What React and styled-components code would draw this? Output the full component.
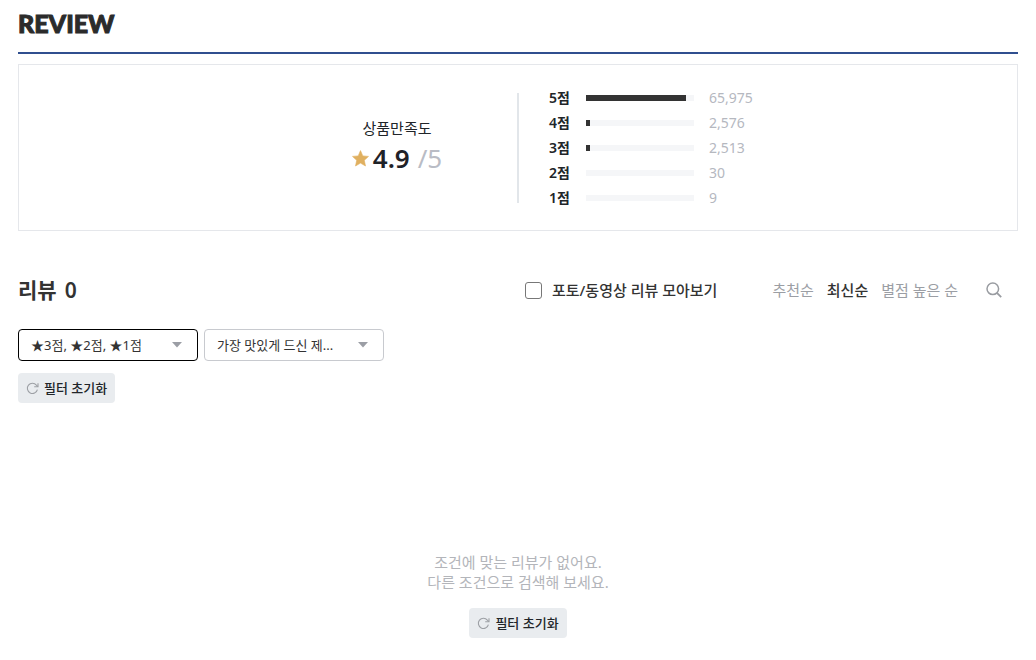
import React, { useState } from "react";
import styled, { createGlobalStyle } from "styled-components";

const GlobalStyle = createGlobalStyle`
  * { box-sizing: border-box; }
  body {
    margin: 0;
    background: #fff;
    color: #333;
    font-family: "Noto Sans", "Noto Sans CJK KR", sans-serif;
    font-size: 14px;
    line-height: 20px;
  }
  button, select, input { font: inherit; color: inherit; margin: 0; }
`;

const Page = styled.main`
  padding: 8px 18px 22px;
`;

const Title = styled.h1`
  margin: 0;
  padding-bottom: 14px;
  border-bottom: 2px solid #304f8f;
  color: #2b2b2b;
  font-family: Lato, sans-serif;
  font-size: 25px;
  font-weight: 900;
  line-height: 30px;
  -webkit-text-stroke: 1px #2b2b2b;
`;

const Summary = styled.section`
  display: grid;
  grid-template-columns: 1fr 2px 1fr;
  align-items: center;
  margin-top: 10px;
  padding: 23px 0 22px;
  border: 1px solid #e5e7eb;
`;

const Score = styled.div`
  justify-self: end;
  width: 90px;
  margin-right: 75px;
  text-align: center;
  white-space: nowrap;
`;

const ScoreLabel = styled.div`
  color: #212529;
  font-size: 15px;
`;

const ScoreValue = styled.div`
  display: flex;
  align-items: center;
  justify-content: center;
  height: 40px;
  color: #1f2228;
  font-size: 26px;
  line-height: 40px;

  svg { flex: none; margin-right: 4px; }
  b { font-weight: 600; }
  span { margin-left: 8px; color: #b9bcc5; }
`;

const Divider = styled.div`
  height: 110px;
  background: #e2e6ea;
`;

const Distribution = styled.ul`
  display: grid;
  gap: 5px;
  margin: 0;
  padding: 0 0 0 30px;
  list-style: none;
`;

const DistributionRow = styled.li`
  display: grid;
  grid-template-columns: 22px 108px auto;
  column-gap: 15px;
  align-items: center;
  color: #b5b8bf;
  white-space: nowrap;

  strong { color: #212529; font-weight: 600; }
`;

const Track = styled.div`
  height: 6px;
  background: #f5f6f8;
`;

const Fill = styled.div`
  height: 6px;
  background: #333;
`;

const ListHeader = styled.header`
  display: flex;
  align-items: center;
  margin-top: 44px;
  padding-right: 16px;
  height: 30px;
  white-space: nowrap;
`;

const ListTitle = styled.h2`
  display: flex;
  gap: 8px;
  margin: 0 auto 0 0;
  font-size: 21px;
  font-weight: 600;
  line-height: 30px;
`;

const MediaToggle = styled.label`
  display: flex;
  align-items: center;
  gap: 10px;
  margin-right: 55px;
  font-size: 15px;
  font-weight: 500;

  input {
    appearance: none;
    width: 17px;
    height: 17px;
    border: 1px solid #777;
    border-radius: 3px;
    background: #fff;
  }
  input:checked { background: #333; }
`;

const SortTabs = styled.nav`
  display: flex;
  gap: 13px;
  font-size: 15px;
`;

const SortButton = styled.button`
  padding: 0;
  border: 0;
  background: none;
  color: ${(p) => (p.$active ? "#333" : "#9b9ea4")};
  font-weight: ${(p) => (p.$active ? 500 : 400)};
  cursor: pointer;
`;

const SearchButton = styled.button`
  display: flex;
  margin-left: 28px;
  padding: 0;
  border: 0;
  background: none;
  cursor: pointer;
`;

const Filters = styled.div`
  display: flex;
  gap: 6px;
  margin: 24px 0 12px;
`;

const SelectBox = styled.div`
  position: relative;
  width: 180px;

  svg {
    position: absolute;
    top: 13px;
    right: 16px;
    pointer-events: none;
  }
`;

const Select = styled.select`
  display: block;
  appearance: none;
  width: 100%;
  height: 32px;
  padding: 0 32px 0 12px;
  border: 1px solid ${(p) => (p.$active ? "#000" : "#c8cacf")};
  border-radius: 4px;
  background: #fff;
  font-size: 13px;
`;

const ResetButtonRoot = styled.button`
  display: inline-flex;
  align-items: center;
  gap: 5px;
  height: 30px;
  padding: 0 8px;
  border: 0;
  border-radius: 4px;
  background: #e9ecef;
  color: #212529;
  font-size: 13px;
  font-weight: 500;
  white-space: nowrap;
  cursor: pointer;
`;

const Empty = styled.section`
  display: flex;
  flex-direction: column;
  align-items: center;
  padding-top: 149px;
  color: #b3b5ba;
  font-size: 15px;
  text-align: center;

  p { margin: 0 0 16px; }
`;

const ratings = [
  { label: "5점", count: "65,975", fill: 100 },
  { label: "4점", count: "2,576", fill: 4 },
  { label: "3점", count: "2,513", fill: 4 },
  { label: "2점", count: "30", fill: 0 },
  { label: "1점", count: "9", fill: 0 },
];

const sorts = ["추천순", "최신순", "별점 높은 순"];

function StarIcon() {
  return (
    <svg width="17" height="17" viewBox="0 0 17 17" aria-hidden="true">
      <path
        fill="#e0b060"
        stroke="#e0b060"
        strokeWidth="0.6"
        strokeLinejoin="round"
        d="M8.5 0.6 10.8 5.9 16.5 6.4 12.3 10.3 13.5 16 8.5 13.1 3.5 16 4.7 10.3 0.5 6.4 6.2 5.9Z"
      />
    </svg>
  );
}

function CaretIcon() {
  return (
    <svg width="10" height="6" viewBox="0 0 10 6" aria-hidden="true">
      <path fill="#9b9ea5" d="M0 0h10L5 5.5z" />
    </svg>
  );
}

function SearchIcon() {
  return (
    <svg width="16" height="16" viewBox="0 0 16 16" fill="none" stroke="#999ca1" aria-hidden="true">
      <circle cx="6.8" cy="6.8" r="5.8" strokeWidth="1.5" />
      <path d="M10.9 10.9 15.2 15.2" strokeWidth="1.8" />
    </svg>
  );
}

function RefreshIcon() {
  return (
    <svg width="13" height="13" viewBox="0 0 13 13" fill="none" stroke="#9da0a5" aria-hidden="true">
      <path d="M11.4 7.6A5.1 5.1 0 1 1 10.4 3.1L11.8 4.6" strokeWidth="1.1" />
      <path d="M12 1.2V4.8H8.2" strokeWidth="1.1" />
    </svg>
  );
}

function ResetButton({ onClick }) {
  return (
    <ResetButtonRoot type="button" onClick={onClick}>
      <RefreshIcon />
      필터 초기화
    </ResetButtonRoot>
  );
}

function FilterSelect({ label, options, active }) {
  return (
    <SelectBox>
      <Select aria-label={label} $active={active}>
        {options.map((o) => (
          <option key={o}>{o}</option>
        ))}
      </Select>
      <CaretIcon />
    </SelectBox>
  );
}

export default function App() {
  const [sort, setSort] = useState("최신순");
  const [mediaOnly, setMediaOnly] = useState(false);
  const reset = () => setMediaOnly(false);

  return (
    <>
      <GlobalStyle />
      <Page>
        <Title>REVIEW</Title>
        <Summary>
          <Score>
            <ScoreLabel>상품만족도</ScoreLabel>
            <ScoreValue>
              <StarIcon />
              <b>4.9</b>
              <span>/5</span>
            </ScoreValue>
          </Score>
          <Divider />
          <Distribution>
            {ratings.map((r) => (
              <DistributionRow key={r.label}>
                <strong>{r.label}</strong>
                <Track>
                  <Fill style={{ width: r.fill }} />
                </Track>
                <span>{r.count}</span>
              </DistributionRow>
            ))}
          </Distribution>
        </Summary>

        <ListHeader>
          <ListTitle>
            리뷰 <span>0</span>
          </ListTitle>
          <MediaToggle>
            <input
              type="checkbox"
              checked={mediaOnly}
              onChange={(e) => setMediaOnly(e.target.checked)}
            />
            포토/동영상 리뷰 모아보기
          </MediaToggle>
          <SortTabs>
            {sorts.map((s) => (
              <SortButton key={s} type="button" $active={s === sort} onClick={() => setSort(s)}>
                {s}
              </SortButton>
            ))}
          </SortTabs>
          <SearchButton type="button" aria-label="검색">
            <SearchIcon />
          </SearchButton>
        </ListHeader>

        <Filters>
          <FilterSelect label="별점" options={["★3점, ★2점, ★1점"]} active />
          <FilterSelect label="제품" options={["가장 맛있게 드신 제..."]} />
        </Filters>
        <ResetButton onClick={reset} />

        <Empty>
          <p>
            조건에 맞는 리뷰가 없어요.
            <br />
            다른 조건으로 검색해 보세요.
          </p>
          <ResetButton onClick={reset} />
        </Empty>
      </Page>
    </>
  );
}
